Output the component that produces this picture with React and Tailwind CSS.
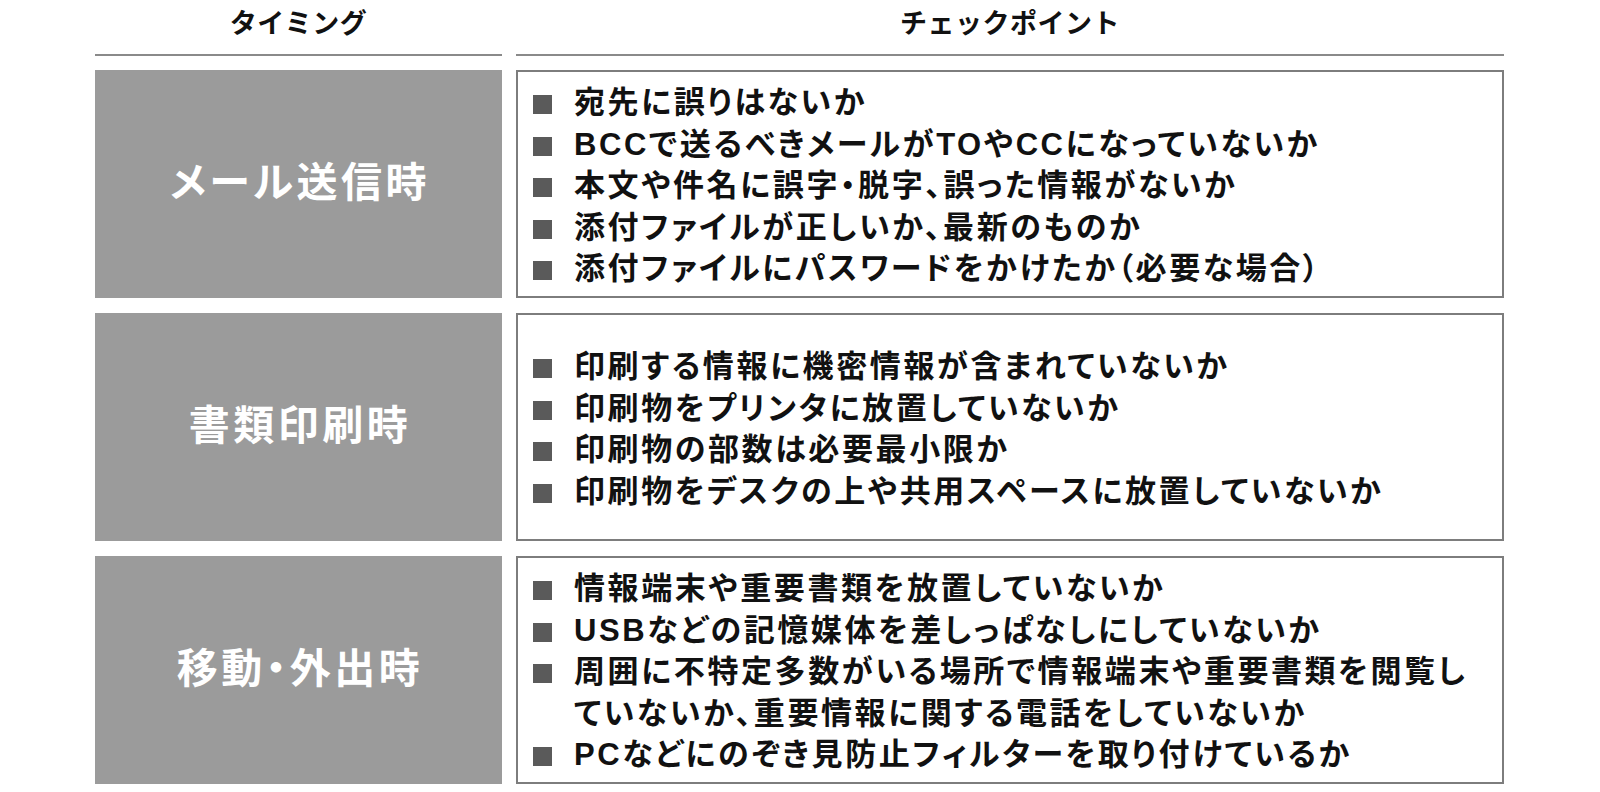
const rows = [
  {
    label: 'メール送信時',
    items: [
      '宛先に誤りはないか',
      'BCCで送るべきメールがTOやCCになっていないか',
      '本文や件名に誤字・脱字、誤った情報がないか',
      '添付ファイルが正しいか、最新のものか',
      '添付ファイルにパスワードをかけたか（必要な場合）',
    ],
  },
  {
    label: '書類印刷時',
    items: [
      '印刷する情報に機密情報が含まれていないか',
      '印刷物をプリンタに放置していないか',
      '印刷物の部数は必要最小限か',
      '印刷物をデスクの上や共用スペースに放置していないか',
    ],
  },
  {
    label: '移動・外出時',
    items: [
      '情報端末や重要書類を放置していないか',
      'USBなどの記憶媒体を差しっぱなしにしていないか',
      ['周囲に不特定多数がいる場所で情報端末や重要書類を閲覧し', 'ていないか、重要情報に関する電話をしていないか'],
      'PCなどにのぞき見防止フィルターを取り付けているか',
    ],
  },
];

function CheckItem({ text }) {
  const lines = Array.isArray(text) ? text : [text];
  return (
    <li className="flex items-start">
      <span className="mt-[13px] h-[19px] w-[19px] shrink-0 bg-[#5a5a5a]" />
      <span className="ml-[22px] flex flex-col">
        {lines.map((line) => (
          <span key={line} className="whitespace-nowrap">{line}</span>
        ))}
      </span>
    </li>
  );
}

export default function App() {
  return (
    <div
      className="h-[792px] w-[1600px] overflow-hidden bg-white pl-[95px] text-[#111]"
      style={{ fontFamily: '"Liberation Sans", "Noto Sans CJK JP", sans-serif' }}
    >
      <div className="grid grid-cols-[407px_988px] gap-x-[14px]">
        {/* header */}
        <div className="flex h-[48px] items-center justify-center text-[27px] font-bold tracking-[0.5px]">
          タイミング
        </div>
        <div className="flex h-[48px] items-center justify-center text-[27px] font-bold tracking-[0.5px]">
          チェックポイント
        </div>
        <div className="mt-[6px] h-[2px] bg-[#8a8a8a]" />
        <div className="mt-[6px] h-[2px] bg-[#8a8a8a]" />

        {rows.map((row, i) => (
          <div key={row.label} className="contents">
            <div
              className={`flex h-[228px] items-center justify-center bg-[#9b9b9b] pl-[3px] text-[41px] font-bold tracking-[3.5px] text-white [font-feature-settings:'palt'] ${
                i === 0 ? 'mt-[14px]' : 'mt-[15px]'
              }`}
            >
              {row.label}
            </div>
            <div
              className={`flex h-[228px] items-center border-2 border-[#7d7d7d] pl-[15px] ${
                i === 0 ? 'mt-[14px]' : 'mt-[15px]'
              }`}
            >
              <ul className="pt-[4px] text-[31px] font-semibold leading-[41.5px] tracking-[2.6px] [font-feature-settings:'palt']">
                {row.items.map((item) => (
                  <CheckItem key={Array.isArray(item) ? item[0] : item} text={item} />
                ))}
              </ul>
            </div>
          </div>
        ))}
      </div>
    </div>
  );
}
